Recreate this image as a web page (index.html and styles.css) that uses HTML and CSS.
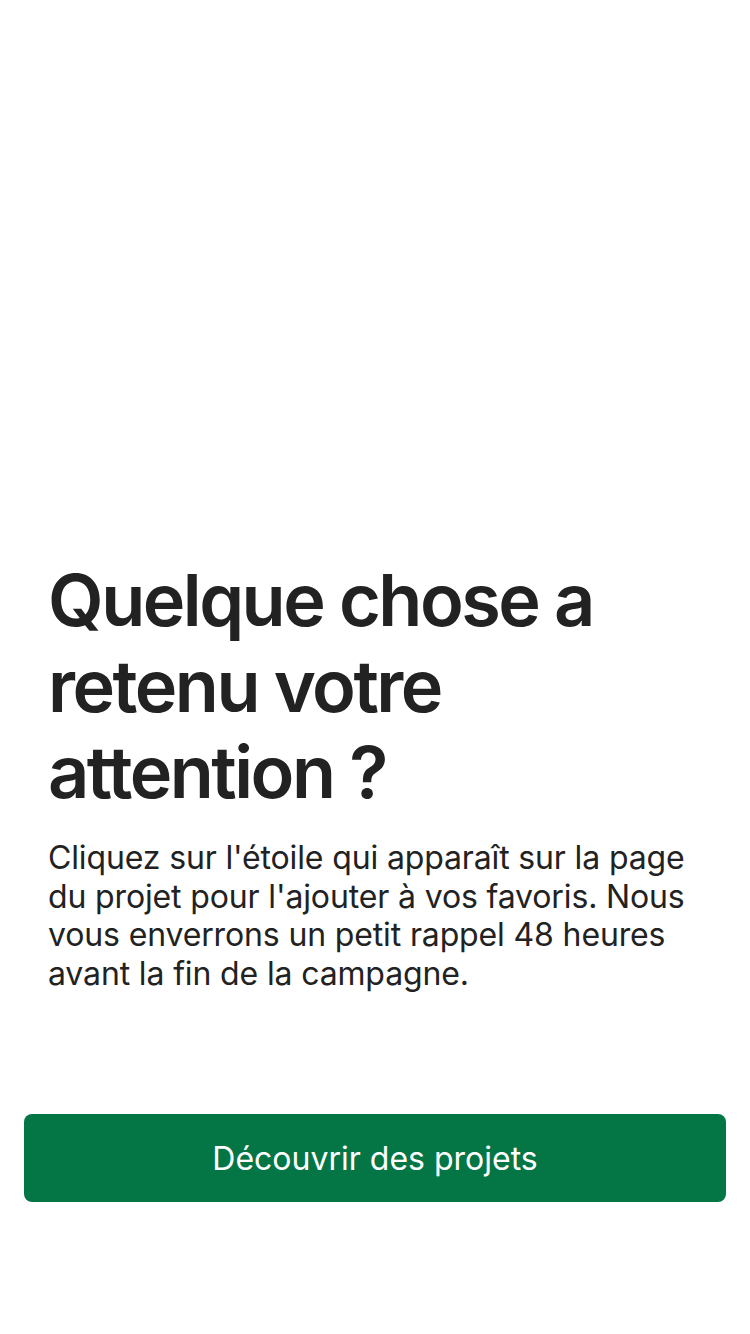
FILE: index.html
```html
<!DOCTYPE html>
<html lang="fr">
<head>
<meta charset="utf-8">
<title>Favoris</title>
<link rel="stylesheet" href="styles.css">
</head>
<body>
<main class="screen">
  <section class="content">
    <h1 class="title">Quelque chose a retenu votre attention ?</h1>
    <p class="text">Cliquez sur l'étoile qui apparaît sur la page du projet pour l'ajouter à vos favoris. Nous vous enverrons un petit rappel 48 heures avant la fin de la campagne.</p>
  </section>
  <div class="actions">
    <button class="cta" type="button">Découvrir des projets</button>
  </div>
</main>
</body>
</html>
```
FILE: styles.css
```css
html, body {
  margin: 0;
  padding: 0;
  background: #ffffff;
}
body {
  font-family: Inter, "Noto Sans", "Liberation Sans", sans-serif;
  color: #222222;
}
.screen {
  display: flex;
  flex-direction: column;
  width: 750px;
  height: 1334px;
}
.content {
  padding: 557px 48px 0;
  display: flex;
  flex-direction: column;
  gap: 24px;
}
.title {
  margin: 0;
  font-size: 72px;
  line-height: 86px;
  font-weight: 600;
  letter-spacing: -2.5px;
  color: #222222;
}
.text {
  margin: 0;
  font-size: 32px;
  line-height: 38.5px;
  font-weight: 400;
  letter-spacing: -0.14px;
  color: #222222;
}
.actions {
  padding: 121px 24px 0;
}
.cta {
  display: block;
  width: 100%;
  height: 88px;
  border: none;
  border-radius: 8px;
  background: #047545;
  color: #ffffff;
  font-family: Inter, "Noto Sans", "Liberation Sans", sans-serif;
  font-size: 32px;
  font-weight: 400;
}
```
